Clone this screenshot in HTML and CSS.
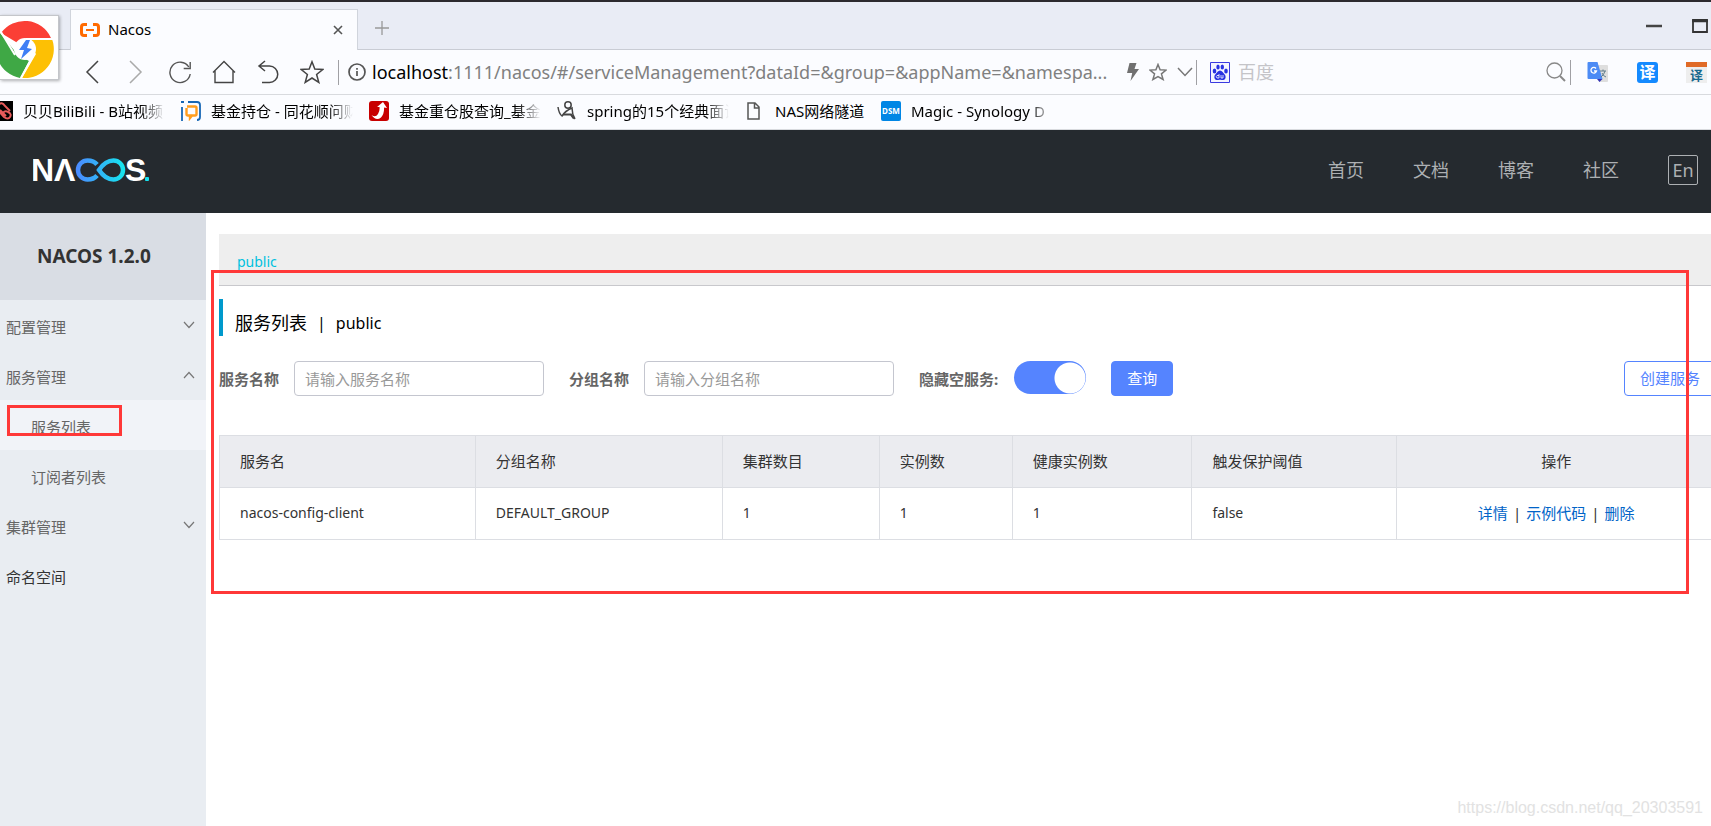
FILE: index.html
```
<!DOCTYPE html>
<html lang="zh-CN">
<head>
<meta charset="utf-8">
<title>Nacos</title>
<link rel="stylesheet" href="styles.css">
</head>
<body>
<div class="browser">
  <div class="tabstrip">
    <div class="tab">
      <svg class="tab-icon" width="20" height="14" viewBox="0 0 20 14" fill="none" stroke="#ff6a00" stroke-width="3"><path d="M7 1.500H4Q1.500 1.500 1.500 4v6q0 2.500 2.500 2.500h3M13 1.500h3q2.500 0 2.500 2.500v6q0 2.500-2.500 2.500h-3"/><path d="M6 7h8" stroke-width="2"/></svg>
      <span class="tab-title">Nacos</span>
      <button class="icon-btn tab-close" aria-label="关闭标签页"><svg width="10" height="10" viewBox="0 0 10 10" stroke="#555" stroke-width="1.600"><path d="M1 1l8 8M9 1L1 9"/></svg></button>
    </div>
    <button class="icon-btn new-tab" aria-label="新建标签页"><svg width="14" height="14" viewBox="0 0 14 14" stroke="#999" stroke-width="1.300"><path d="M7 0v14M0 7h14"/></svg></button>
    <div class="win-controls">
      <button class="icon-btn" aria-label="最小化"><svg width="16" height="14" viewBox="0 0 16 14"><path d="M0 7h16" stroke="#444" stroke-width="2.500"/></svg></button>
      <button class="icon-btn" aria-label="最大化"><svg width="16" height="14" viewBox="0 0 16 14" fill="none" stroke="#333"><path d="M1 1h14v12H1z" stroke-width="1.800"/><path d="M0 2h16" stroke-width="2.500"/></svg></button>
    </div>
  </div>

  <div class="toolbar">
    <button class="icon-btn tool" aria-label="后退"><svg width="24" height="24" viewBox="0 0 24 24" fill="none" stroke="#444" stroke-width="1.500"><path d="M18 1L7 12l11 11"/></svg></button>
    <button class="icon-btn tool" aria-label="前进"><svg width="24" height="24" viewBox="0 0 24 24" fill="none" stroke="#aaa" stroke-width="1.500"><path d="M6 1l11 11L6 23"/></svg></button>
    <button class="icon-btn tool" aria-label="刷新"><svg width="24" height="24" viewBox="0 0 24 24" fill="none" stroke="#555" stroke-width="1.400"><path d="M20.800 7A10.200 10.200 0 1 0 22.200 14"/><path d="M22.200 2v6.500h-6.500"/></svg></button>
    <button class="icon-btn tool" aria-label="主页"><svg width="24" height="24" viewBox="0 0 24 24" fill="none" stroke="#444" stroke-width="1.400"><path d="M1 12.500L12 1.500l11 11M3 11v11.500h18V11"/></svg></button>
    <button class="icon-btn tool" aria-label="恢复"><svg width="24" height="24" viewBox="0 0 24 24" fill="none" stroke="#444" stroke-width="1.500"><path d="M9 1L3 6l6 5M3 6h10.500a8 8 0 0 1 0 16.500H6"/></svg></button>
    <button class="icon-btn tool" aria-label="收藏夹"><svg width="24" height="24" viewBox="0 0 24 24" fill="none" stroke="#444" stroke-width="1.500"><path d="M12 1.800l2.800 7.300 8 .4-6.200 5 2.200 7.900L12 18l-6.800 4.400 2.200-7.900-6.200-5 8-.4z"/></svg></button>
    <span class="rule rule-left"></span>
    <div class="address">
      <svg width="18" height="18" viewBox="0 0 18 18" fill="none" stroke="#555" stroke-width="1.700"><circle cx="9" cy="9" r="8"/><path d="M9 8v5M9 5v1.800"/></svg>
      <span class="url"><span class="url-host">localhost</span>:1111/nacos/#/serviceManagement?dataId=&amp;group=&amp;appName=&amp;namespa...</span>
    </div>
    <div class="address-actions">
      <button class="icon-btn" aria-label="极速模式"><svg width="12" height="20" viewBox="0 0 12 20" fill="#707070"><path d="M2.500 1h7L7.500 7H12L3.500 19l1.700-8H0z"/></svg></button>
      <button class="icon-btn" aria-label="收藏"><svg width="18" height="18" viewBox="0 0 24 24" fill="none" stroke="#777" stroke-width="2"><path d="M12 2l2.800 7.100 8 .4-6.200 5 2.200 7.500L12 18l-6.800 4 2.200-7.500-6.200-5 8-.4z"/></svg></button>
      <button class="icon-btn" aria-label="展开"><svg width="16" height="10" viewBox="0 0 16 10" fill="none" stroke="#777" stroke-width="1.500"><path d="M1 1l7 7.500L15 1"/></svg></button>
    </div>
    <span class="rule"></span>
    <label class="search-box">
      <svg width="20" height="21" viewBox="0 0 20 21"><path d="M.5.500h19v20H.5z" fill="#f4f5ff" stroke="#3b3be0"/><g fill="#2932e1"><ellipse cx="4.500" cy="9" rx="1.800" ry="2.500"/><ellipse cx="8" cy="5" rx="1.700" ry="2.500"/><ellipse cx="12.300" cy="5" rx="1.700" ry="2.500"/><ellipse cx="16" cy="9" rx="1.800" ry="2.500"/><path d="M10 8.500c2 0 3 2.300 4.500 3.800 1.800 1.700 1.500 5.500-1.200 5.700-1.300 0-2-.3-3.300-.3s-2 .3-3.300.3c-2.700-.2-3-4-1.200-5.700C7 10.800 8 8.500 10 8.500z"/></g><path d="M9 12v4H7q-1.500-1.500 0-2.500h2M11 13v3h2v-3" fill="none" stroke="#fff" stroke-width=".8"/></svg>
      <input class="search-input" type="text" placeholder="百度" aria-label="搜索">
    </label>
    <button class="icon-btn search-go" aria-label="搜索"><svg width="20" height="20" viewBox="0 0 20 20" fill="none" stroke="#888"><circle cx="8.500" cy="8.500" r="7.500" stroke-width="1.300"/><path d="M14 14l5 5" stroke-width="2"/></svg></button>
    <span class="rule"></span>
    <div class="extensions">
      <button class="icon-btn" aria-label="谷歌翻译"><svg width="22" height="22" viewBox="0 0 22 22"><path d="M9 4h11q1 0 1 1v15q0 1-1 1h-8z" fill="#dedede"/><path d="M1.500 1h9l5 17h-14Q.5 18 .5 17V2Q.5 1 1.500 1z" fill="#4c8bf5"/><path d="M10 18h5.500L12.500 21z" fill="#3535b5"/><path d="M13 10h6M16 8.500V10M18 10q-1 4-4 6M15 12q1 3 4 4" fill="none" stroke="#607d8b"/><path d="M9 7.500A2.800 2.800 0 1 0 9.500 10H7" fill="none" stroke="#fff" stroke-width="1.300"/></svg></button>
      <button class="icon-btn translate">译</button>
      <button class="icon-btn page-translate">译</button>
    </div>
  </div>

  <nav class="bookmarks" aria-label="书签">
    <a class="bookmark" href="#"><svg width="20" height="20" viewBox="0 0 20 20"><path d="M0 0h20v20H0z" fill="#000"/><g fill="none" stroke="#e85b5b" stroke-width="2"><path d="M5 4q4-4 7 1l5 5M4 8l7 8q4 3 6 0t-2-5q-3-2-5 1M7 9l6 6"/></g></svg><span class="bookmark-label">贝贝BiliBili - B站视频</span></a>
    <a class="bookmark" href="#"><svg width="20" height="20" viewBox="0 0 20 20" fill="none" stroke="#1767b5" stroke-width="1.800"><path d="M1 6v14M0 1h3M7 1h9q3 0 3 3v12q0 3-3 3"/><path d="M6 5.500h8q1.500 0 1.500 1.500v6q0 1.500-1.500 1.500h-3L9 17v-2.500H7Q5.500 14.500 5.500 13V7" stroke="#ff9d1e" stroke-width="2.400"/></svg><span class="bookmark-label">基金持仓 - 同花顺问财</span></a>
    <a class="bookmark" href="#"><svg width="20" height="20" viewBox="0 0 20 20"><rect width="20" height="20" rx="3" fill="#c80000"/><path d="M2.500 14q4 3 6.500-1 2-3 1.500-7L8 6l6-5 4 6-3-.5q.5 6-3 10-5 4-9.500-2.500z" fill="#fff"/></svg><span class="bookmark-label">基金重仓股查询_基金</span></a>
    <a class="bookmark" href="#"><svg width="20" height="20" viewBox="0 0 20 20" fill="none" stroke="#444" stroke-width="1.500"><circle cx="11" cy="4" r="3.200"/><path d="M1 6q1 7 4 9 3-5 10-8 0 6 3 11"/><path d="M6 13.500h8l3 4" stroke-width="2.200"/></svg><span class="bookmark-label">spring的15个经典面试</span></a>
    <a class="bookmark" href="#"><svg width="20" height="20" viewBox="0 0 20 20" fill="none" stroke="#555" stroke-width="1.500"><path d="M3 2h7l4 4v12H3zM9.500 2v5H14"/></svg><span class="bookmark-label">NAS网络隧道</span></a>
    <a class="bookmark" href="#"><svg width="20" height="20" viewBox="0 0 20 20"><rect width="20" height="20" rx="2" fill="#0086e5"/><text x="10" y="13" class="dsm" text-anchor="middle">DSM</text></svg><span class="bookmark-label">Magic - Synology D</span></a>
  </nav>

  <div class="browser-logo">
    <svg width="60" height="60" viewBox="0 0 60 60"><path d="M30 30L5 15A29 29 0 0 1 55 20H30z" fill="#fb3f35"/><path d="M30 21h26A29 29 0 0 1 26 60l14-24z" fill="#fdc004"/><path d="M22 37L4 15A30 30 0 0 0 24 60l9-17z" fill="#3fa845"/><path d="M5 14l14 23M30 21h27M38 36L25 60" stroke="#fff" stroke-width="2"/><circle cx="29" cy="31" r="11" fill="#fff"/><path d="M30 22l-7 10h5l-3 9 11-10-5-1 3-8z" fill="#3f7ff5"/></svg>
  </div>
</div>

<header class="site-header">
  <a class="logo" href="#" aria-label="NACOS">
    <svg width="118" height="28" viewBox="0 0 118 28">
      <defs><linearGradient id="loop" x1="0" x2="1"><stop offset="0" stop-color="#4a8cff"/><stop offset="1" stop-color="#17e3f0"/></linearGradient></defs>
      <g class="logo-text"><text x="-2" y="25">N</text><text x="21" y="25">Λ</text><text x="92" y="25">S</text></g>
      <path d="M64 8.500C62 6 58 4.500 54.500 4.500a9.300 9.300 0 0 0 0 19C58 23.500 62 22 64 19.500M66 14C71 6.500 76 4.500 80.500 4.500a9.300 9.300 0 0 1 0 19C76 23.500 71 21.500 66 14z" fill="none" stroke="url(#loop)" stroke-width="4.500"/>
      <rect x="112" y="21" width="4" height="4" rx="1" fill="#17e3f0"/>
    </svg>
  </a>
  <nav class="site-nav">
    <a href="#">首页</a>
    <a href="#">文档</a>
    <a href="#">博客</a>
    <a href="#">社区</a>
    <button class="lang">En</button>
  </nav>
</header>

<div class="layout">
  <aside class="sidebar">
    <h1 class="product">NACOS 1.2.0</h1>
    <nav class="menu">
      <a class="menu-item" href="#">配置管理<svg width="12" height="8" viewBox="0 0 12 8"><path d="M1 1l5 5.500L11 1"/></svg></a>
      <a class="menu-item" href="#">服务管理<svg width="12" height="8" viewBox="0 0 12 8"><path d="M1 7l5-5.500L11 7"/></svg></a>
      <a class="menu-item sub active" href="#">服务列表</a>
      <a class="menu-item sub" href="#">订阅者列表</a>
      <a class="menu-item" href="#">集群管理<svg width="12" height="8" viewBox="0 0 12 8"><path d="M1 1l5 5.500L11 1"/></svg></a>
      <a class="menu-item strong" href="#">命名空间</a>
    </nav>
    <div class="mark mark-menu"></div>
  </aside>

  <main class="main">
    <div class="content">
      <div class="namespaces"><a href="#">public</a></div>
      <h2 class="page-title"><span>服务列表</span><span class="page-space">|</span><span class="page-space">public</span></h2>
      <form class="filters">
        <label for="service">服务名称</label>
        <input class="field" id="service" type="text" placeholder="请输入服务名称">
        <label for="group">分组名称</label>
        <input class="field" id="group" type="text" placeholder="请输入分组名称">
        <label for="hide-empty">隐藏空服务:</label>
        <input class="switch" id="hide-empty" type="checkbox" checked>
        <button class="btn btn-primary" type="button">查询</button>
        <button class="btn btn-outline" type="button">创建服务</button>
      </form>
      <table class="services">
        <colgroup><col class="c-name"><col class="c-group"><col class="c-cluster"><col class="c-inst"><col class="c-healthy"><col class="c-limit"><col></colgroup>
        <thead>
          <tr><th>服务名</th><th>分组名称</th><th>集群数目</th><th>实例数</th><th>健康实例数</th><th>触发保护阈值</th><th class="ops">操作</th></tr>
        </thead>
        <tbody>
          <tr><td>nacos-config-client</td><td>DEFAULT_GROUP</td><td>1</td><td>1</td><td>1</td><td>false</td><td class="ops"><a href="#">详情</a><span class="bar">|</span><a href="#">示例代码</a><span class="bar">|</span><a href="#">删除</a></td></tr>
        </tbody>
      </table>
    </div>
    <div class="mark mark-main"></div>
    <div class="watermark">https://blog.csdn.net/qq_20303591</div>
  </main>
</div>
</body>
</html>
```
FILE: styles.css
```
* { box-sizing: border-box; }

body {
  margin: 0;
  min-height: 100vh;
  display: flex;
  flex-direction: column;
  overflow: hidden;
  background: #fff;
  color: #333;
  font: 15px/20px "Noto Sans", "Noto Sans CJK SC", sans-serif;
}

a { color: inherit; text-decoration: none; }
button, input { font: inherit; }
svg { display: block; flex: none; }

.icon-btn {
  display: flex;
  align-items: center;
  justify-content: center;
  padding: 0;
  border: 0;
  background: none;
}

/* Browser frame */
.browser { position: relative; color: #000; background: #fbfcff; }

.tabstrip {
  display: flex;
  height: 50px;
  padding-left: 70px;
  border-top: 2px solid #2c2a2e;
  border-bottom: 1px solid #c9ccd4;
  background: #e9ecf5;
}
.tab {
  display: flex;
  align-items: center;
  width: 288px;
  margin: 7px 0 -1px;
  padding: 0 14px 0 9px;
  border: 1px solid #d0d4dc;
  border-bottom: 0;
  background: #fbfcff;
}
.tab-title { flex: 1; margin-left: 8px; padding-bottom: 2px; font-size: 15px; }
.new-tab { width: 48px; padding-top: 4px; }
.win-controls {
  display: flex;
  align-items: center;
  gap: 30px;
  margin-left: auto;
  padding-right: 3px;
}

.toolbar {
  display: flex;
  align-items: center;
  height: 45px;
  padding-left: 70px;
  border-bottom: 1px solid #d8dade;
}
.tool { width: 44px; height: 44px; }
.rule { width: 1px; height: 25px; background: #a0a0a4; }
.rule-left { margin: 0 9px 0 4px; }
.address { display: flex; align-items: center; gap: 6px; width: 766px; white-space: nowrap; }
.url { color: #808080; font-size: 18px; line-height: 28px; }
.url-host { color: #000; }
.address-actions { display: flex; align-items: center; gap: 10px; width: 82px; padding-left: 13px; }
.search-box { display: flex; flex: 1; align-items: center; gap: 8px; padding-left: 13px; }
.search-input { flex: 1; min-width: 0; padding: 0; border: 0; background: none; font-size: 18px; }
.search-input::placeholder { color: #c4c4c8; }
.search-go { margin-right: 4px; }
.extensions { display: flex; align-items: center; gap: 28px; padding: 0 4px 0 16px; }
.translate {
  width: 21px;
  height: 21px;
  border-radius: 3px;
  background: #148aff;
  color: #fff;
  font-size: 16px;
  font-weight: 700;
  line-height: 20px;
}
.page-translate {
  width: 21px;
  height: 21px;
  border-top: 5px solid #e06a26;
  background: #eee;
  color: #18698f;
  font-size: 13px;
  font-weight: 700;
  line-height: 16px;
}

.bookmarks {
  display: flex;
  gap: 16px;
  height: 35px;
  margin-left: -7px;
  padding-bottom: 2px;
  align-items: center;
  border-bottom: 1px solid #d8dade;
}
.bookmark { display: flex; align-items: center; gap: 10px; }
.bookmark-label {
  width: 142px;
  overflow: hidden;
  white-space: nowrap;
  mask-image: linear-gradient(to right, #000 118px, transparent);
}
.bookmark:nth-child(5) .bookmark-label { width: 90px; mask-image: none; }
.dsm { fill: #fff; font: 700 8px "Noto Sans", sans-serif; }

.browser-logo {
  position: absolute;
  top: 15px;
  left: 0;
  width: 59px;
  height: 65px;
  padding-top: 2px;
  overflow: hidden;
  border: 1px solid #c4c6ca;
  border-left: 0;
  background: #fff;
  box-shadow: 1px 1px 3px rgba(0, 0, 0, .3);
}
.browser-logo svg { margin-left: -4px; }

/* Site header */
.site-header {
  display: flex;
  align-items: center;
  justify-content: space-between;
  height: 83px;
  padding: 0 13px 3px 33px;
  background: #252a2f;
}
.logo-text { fill: #fff; font: 700 32px "Liberation Sans", sans-serif; }
.site-nav {
  display: flex;
  align-items: center;
  gap: 49px;
  color: #adb0b3;
  font-size: 18px;
}
.lang {
  width: 30px;
  height: 30px;
  padding: 0;
  border: 1px solid #adb0b3;
  border-radius: 2px;
  background: none;
  color: inherit;
  line-height: 26px;
}

/* Page layout */
.layout { display: flex; flex: 1; }

.sidebar { position: relative; width: 206px; background: #e9edf2; }
.product {
  margin: 0;
  padding: 0 0 0 37px;
  background: #d9dde4;
  font-size: 19px;
  line-height: 87px;
}
.menu-item {
  display: flex;
  align-items: center;
  justify-content: space-between;
  height: 50px;
  padding: 4px 11px 0 6px;
  color: #666;
}
.menu-item svg { margin-bottom: 4px; fill: none; stroke: #777; stroke-width: 1.2; }
.menu-item.sub { padding-left: 31px; }
.menu-item.active { background: #f1f3f8; }
.menu-item.strong { color: #333; }

.main { position: relative; flex: 1; min-width: 0; padding: 21px 0 0 13px; }
.content { margin-right: -5px; }

.namespaces {
  height: 52px;
  padding: 18px 18px 0;
  border-bottom: 1px solid #c8c8cc;
  background: #eee;
  color: #00c1de;
  font-size: 14px;
}
.page-title {
  display: flex;
  align-items: center;
  gap: 10px;
  height: 37px;
  margin: 13px 0 25px;
  padding: 10px 0 0 12px;
  border-left: 4px solid #0099cc;
  color: #000;
  font-size: 18px;
  font-weight: 400;
}
.page-space { font-size: 16px; }

.filters { display: flex; align-items: center; height: 35px; margin-bottom: 39px; }
.filters label { margin-right: 15px; color: #666; font-weight: 700; white-space: nowrap; }
.field {
  width: 250px;
  height: 35px;
  margin-right: 25px;
  padding: 0 10px;
  border: 1px solid #c4c6cf;
  border-radius: 4px;
}
.field::placeholder { color: #999; }
.switch {
  flex: none;
  width: 72px;
  height: 33px;
  margin: 0 25px 2px 1px;
  border-radius: 17px;
  appearance: none;
  background: radial-gradient(circle at 56px 17px, #fff 15px, #5584ff 16px);
}
.btn { height: 35px; padding: 0 15px 2px; border: 1px solid #5584ff; border-radius: 4px; white-space: nowrap; }
.btn-primary { background: #5584ff; color: #fff; }
.btn-outline { margin-left: auto; background: #fff; color: #5584ff; }

.services { width: 100%; table-layout: fixed; border-collapse: collapse; }
.services th, .services td {
  height: 52px;
  padding: 0 20px 2px;
  border: 1px solid #dcdee3;
  text-align: left;
  font-weight: 400;
  white-space: nowrap;
}
.services th { background: #ebecf0; }
.services td { font-size: 14px; }
.services .ops { font-size: 15px; text-align: center; }
.services td a { color: #0064c8; }
.bar { margin: 0 5px; }
.c-name { width: 17.1%; }
.c-group { width: 16.5%; }
.c-cluster { width: 10.5%; }
.c-inst { width: 8.9%; }
.c-healthy { width: 12%; }
.c-limit { width: 13.7%; }

/* Red outlines and watermark over the page */
.mark { position: absolute; border: 3px solid #ff3838; pointer-events: none; }
.mark-menu { top: 192px; left: 7px; width: 115px; height: 31px; }
.mark-main { top: 57px; right: 22px; left: 5px; height: 324px; }
.watermark {
  position: absolute;
  right: 8px;
  bottom: 8px;
  color: #e2e2e2;
  font: 16px/20px "Liberation Sans", Arial, sans-serif;
}
```
